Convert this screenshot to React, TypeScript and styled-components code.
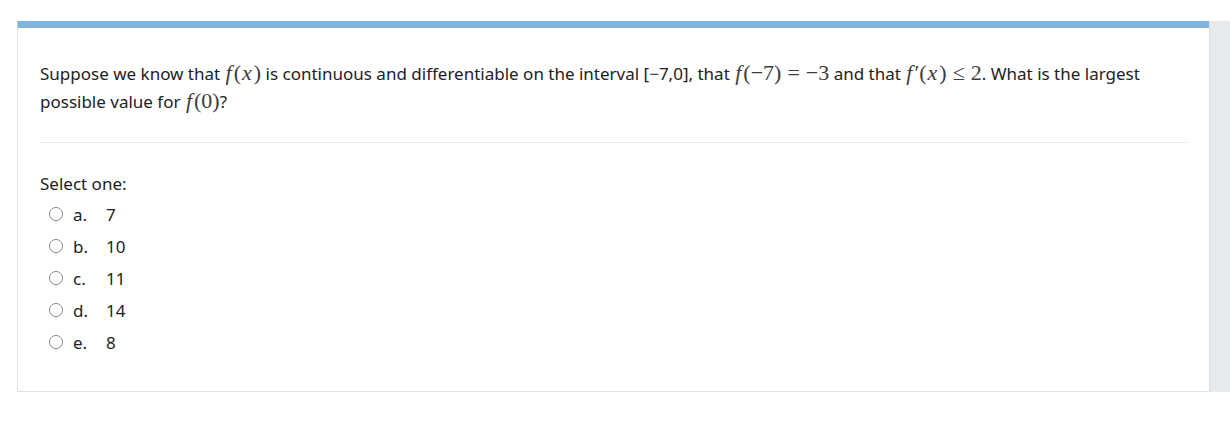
import React from 'react';
import styled, { createGlobalStyle } from 'styled-components';

const GlobalStyle = createGlobalStyle`
    html, body {
        margin: 0;
        padding: 0;
        background: #fff;
    }
    body {
        font-family: 'Noto Sans', 'Open Sans', sans-serif;
        color: #1d2125;
    }
`;

const options = [
    { letter: 'a.', value: '7' },
    { letter: 'b.', value: '10' },
    { letter: 'c.', value: '11' },
    { letter: 'd.', value: '14' },
    { letter: 'e.', value: '8' },
];

const Page = styled.div`
    display: flex;
    padding: 21px 0 0 17px;
    width: 100%;
    box-sizing: border-box;
`;

const Card = styled.section`
    flex: 1;
    border-top: 7px solid #80b5dc;
    border-left: 1px solid #dee2e6;
    border-bottom: 1px solid #dee2e6;
    padding: 32px 22px 33px 22px;
`;

const Sidebar = styled.aside`
    width: 20px;
    background: #e7eaed;
    border-left: 1px solid #dcdfe3;
    flex-shrink: 0;
`;

const Question = styled.p`
    margin: 0;
    font-size: 17px;
    line-height: 28px;
`;

const Math = styled.span`
    font-family: 'Liberation Serif', 'DejaVu Serif', serif;
    font-size: 22px;
    line-height: 1;
    color: #3c3c3c;
    white-space: nowrap;
`;

const Var = styled.i`
    font-style: italic;
    padding: 0 2px 0 1px;
`;

const Op = styled.span`
    padding: 0 6px;
`;

const Divider = styled.hr`
    border: 0;
    border-top: 1px solid #e6e6e6;
    margin: 26px 0 30px 0;
`;

const Prompt = styled.div`
    font-size: 17px;
    line-height: 22px;
    margin-bottom: 3px;
`;

const OptionList = styled.div`
    display: flex;
    flex-direction: column;
`;

const OptionRow = styled.label`
    display: flex;
    align-items: center;
    height: 32px;
    font-size: 17px;
    padding-left: 9px;
`;

const Radio = styled.span`
    width: 14px;
    height: 14px;
    border: 1px solid #8a8a8a;
    border-radius: 50%;
    box-sizing: border-box;
    margin-right: 10px;
    flex-shrink: 0;
`;

const Letter = styled.span`
    width: 33px;
`;

const F = ({ children }: { children: React.ReactNode }) => (
    <Math>
        <Var>f</Var>
        {children}
    </Math>
);

export default function App() {
    return (
        <>
            <GlobalStyle />
            <Page>
                <Card>
                    <Question>
                        Suppose we know that{' '}
                        <F>
                            (<Var>x</Var>)
                        </F>{' '}
                        is continuous and differentiable on the interval [−7,0], that{' '}
                        <F>
                            (−7)<Op>=</Op>−3
                        </F>{' '}
                        and that{' '}
                        <F>
                            ′(<Var>x</Var>)<Op>≤</Op>2
                        </F>
                        . What is the largest possible value for{' '}
                        <F>(0)</F>?
                    </Question>
                    <Divider />
                    <Prompt>Select one:</Prompt>
                    <OptionList>
                        {options.map((o) => (
                            <OptionRow key={o.letter}>
                                <Radio />
                                <Letter>{o.letter}</Letter>
                                <span>{o.value}</span>
                            </OptionRow>
                        ))}
                    </OptionList>
                </Card>
                <Sidebar />
            </Page>
        </>
    );
}
